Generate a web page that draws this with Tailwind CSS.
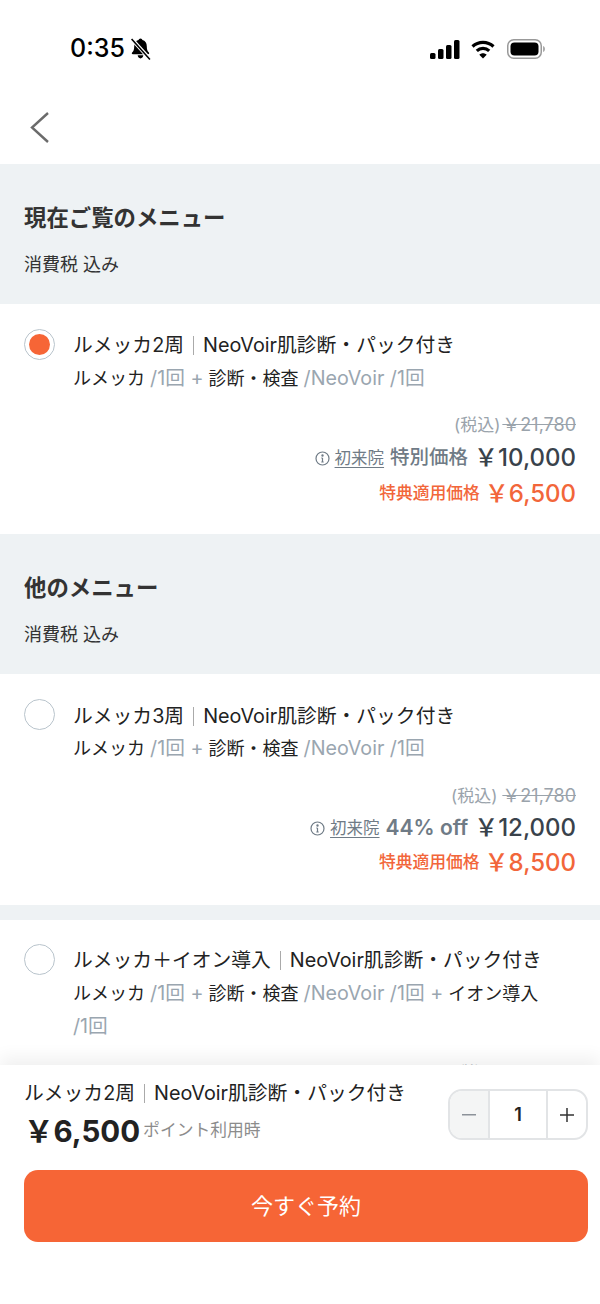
<!DOCTYPE html>
<html lang="ja"><head><meta charset="utf-8"><script src="https://cdn.jsdelivr.net/npm/@tailwindcss/browser@4"></script></head>
<body class="m-0 bg-white">
<div class="relative w-[600px] h-[1304px] overflow-hidden bg-white text-[#222] font-['Inter','Noto_Sans_CJK_JP',sans-serif]">
  <div class="h-[94px] flex justify-between items-start pt-[33px] pl-[70px] pr-[53px]">
    <div class="flex items-center gap-[5px]">
      <span class="text-[25px] leading-[30px] font-medium text-black">0:35</span>
      <svg width="21" height="22" viewBox="0 0 20 21" class="mt-[1px]"><path d="M10 .5c1 0 1.700.7 1.800 1.500 2.800.7 4.200 3 4.200 5.800 0 3.200.7 4.700 2 6 .6.7.2 1.700-.7 1.700H2.700c-.9 0-1.300-1-.7-1.700 1.300-1.300 2-2.800 2-6C4 5 5.400 2.700 8.200 2 8.300 1.200 9 .5 10 .5zM7.300 16.500h5.400c-.2 1.500-1.300 3-2.700 3s-2.500-1.500-2.700-3z" fill="#000"/><path d="M2 1.500 18.500 19.500" stroke="#fff" stroke-width="3.500"/><path d="M1.500 1 19 20.500" stroke="#000" stroke-width="1.500"/></svg>
    </div>
    <div class="flex items-center gap-[10px] mt-[6px]">
      <svg width="30" height="19" viewBox="0 0 30 19" fill="#000"><rect x="0" y="13" width="5.500" height="6" rx="1.500"/><rect x="8" y="9" width="5.500" height="10" rx="1.500"/><rect x="16" y="5" width="5.500" height="14" rx="1.500"/><rect x="24" y="0" width="5.500" height="19" rx="1.500"/></svg>
      <svg width="26" height="19" viewBox="0 0 24 19" fill="none" stroke="#000" stroke-width="3.200"><path d="M1.500 6.500C7.500 1 16.500 1 22.500 6.500"/><path d="M5.800 10.800C9.300 7.500 14.700 7.500 18.200 10.800"/><path d="M12 18.500 8.300 14.700C10.500 12.700 13.500 12.700 15.700 14.700Z" fill="#000" stroke="none"/></svg>
      <svg width="41" height="20" viewBox="0 0 39 20"><rect x=".75" y=".75" width="33.500" height="18.500" rx="6" fill="none" stroke="#999" stroke-width="1.500"/><rect x="3.500" y="3.500" width="28" height="13" rx="4" fill="#000"/><path d="M36 7c1.500.5 2 1.600 2 3s-.5 2.500-2 3z" fill="#aaa"/></svg>
    </div>
  </div>
  <div class="h-[70px] pl-[30px] pt-[17px]">
    <svg width="20" height="32" viewBox="0 0 20 32" fill="none" stroke="#6b6b6b" stroke-width="2.400"><path d="M18 2 2 16.500 18 31" /></svg>
  </div>

  <section class="h-[140px] bg-[#eef2f4] px-6 pt-[39px]">
    <h2 class="text-[22.400px] leading-[30px] font-semibold text-[#333]">現在ご覧のメニュー</h2>
    <p class="mt-[20px] text-[18px] leading-[24px] text-[#333]">消費税 込み</p>
  </section>

  <article class="h-[230px] pl-6 pr-6 pt-[26px]">
    <div class="flex gap-[18px]">
      <div class="w-[31px] h-[31px] mt-[-1px] rounded-full border-[1.500px] border-[#b9c4cc] flex items-center justify-center shrink-0"><div class="w-[21px] h-[21px] rounded-full bg-[#f66536]"></div></div>
      <div>
        <div class="text-[19.800px] leading-[30px] text-[#222]">ルメッカ2周<span class="inline-block w-px h-[19px] bg-[#aaa] mx-[9px] align-[-3px]"></span>NeoVoir肌診断・パック付き</div>
        <div class="mt-[3px] text-[18px] leading-[30px] text-[#222]">ルメッカ <span class="text-[#9aa6b0] text-[19.700px]">/1回 +</span> 診断・検査 <span class="text-[#9aa6b0] text-[19.700px]">/NeoVoir /1回</span></div>
      </div>
    </div>
    <div class="mt-[19px] flex flex-col items-end">
      <div class="text-[17px] leading-[24px] text-[#9aa3ab] flex gap-[2px]"><span>(税込)</span><span class="line-through text-[18px]">￥21,780</span></div>
      <div class="h-[36px] flex items-center gap-[6px] mt-[3px]">
        <span class="flex items-center gap-[5px] text-[#6f7b86] text-[16.500px]"><svg width="15" height="15" viewBox="0 0 15 15" fill="none" stroke="#6f7b86" stroke-width="1.200"><circle cx="7.500" cy="7.500" r="6.500"/><path d="M7.500 7v4M6.300 7h1.200M6.300 11h2.400"/><circle cx="7.500" cy="4.500" r=".6" fill="#6f7b86"/></svg><span class="underline underline-offset-3">初来院</span></span>
        <span class="text-[19.500px] text-[#6f7b86] font-medium">特別価格</span>
        <span class="text-[24px] font-medium text-[#39424b]">￥10,000</span>
      </div>
      <div class="h-[36px] flex items-center gap-[5px]">
        <span class="text-[16.800px] font-medium text-[#f2663a]">特典適用価格</span>
        <span class="text-[24px] font-medium text-[#f2663a]">￥6,500</span>
      </div>
    </div>
  </article>

  <section class="h-[140px] bg-[#eef2f4] px-6 pt-[39px]">
    <h2 class="text-[22.400px] leading-[30px] font-semibold text-[#333]">他のメニュー</h2>
    <p class="mt-[20px] text-[18px] leading-[24px] text-[#333]">消費税 込み</p>
  </section>

  <article class="h-[231px] pl-6 pr-6 pt-[27px]">
    <div class="flex gap-[18px]">
      <div class="w-[31px] h-[31px] mt-[-2px] rounded-full border-[1.500px] border-[#b9c4cc] shrink-0"></div>
      <div>
        <div class="text-[19.800px] leading-[30px] text-[#222]">ルメッカ3周<span class="inline-block w-px h-[19px] bg-[#aaa] mx-[9px] align-[-3px]"></span>NeoVoir肌診断・パック付き</div>
        <div class="mt-[2px] text-[18px] leading-[30px] text-[#222]">ルメッカ <span class="text-[#9aa6b0] text-[19.700px]">/1回 +</span> 診断・検査 <span class="text-[#9aa6b0] text-[19.700px]">/NeoVoir /1回</span></div>
      </div>
    </div>
    <div class="mt-[20px] flex flex-col items-end">
      <div class="text-[17px] leading-[24px] text-[#9aa3ab] flex gap-[5px]"><span>(税込)</span><span class="line-through text-[18px]">￥21,780</span></div>
      <div class="h-[36px] flex items-center gap-[6px] mt-[2px]">
        <span class="flex items-center gap-[5px] text-[#6f7b86] text-[16.500px]"><svg width="15" height="15" viewBox="0 0 15 15" fill="none" stroke="#6f7b86" stroke-width="1.200"><circle cx="7.500" cy="7.500" r="6.500"/><path d="M7.500 7v4M6.300 7h1.200M6.300 11h2.400"/><circle cx="7.500" cy="4.500" r=".6" fill="#6f7b86"/></svg><span class="underline underline-offset-3">初来院</span></span>
        <span class="text-[21px] text-[#6f7b86] font-semibold">44% off</span>
        <span class="text-[24px] font-medium text-[#39424b]">￥12,000</span>
      </div>
      <div class="h-[36px] flex items-center gap-[5px] -mt-[1px]">
        <span class="text-[16.800px] font-medium text-[#f2663a]">特典適用価格</span>
        <span class="text-[24px] font-medium text-[#f2663a]">￥8,500</span>
      </div>
    </div>
  </article>

  <div class="h-[15px] bg-[#eef2f4]"></div>

  <article class="pl-6 pr-6 pt-[25px]">
    <div class="flex gap-[18px]">
      <div class="w-[31px] h-[31px] mt-[-1px] rounded-full border-[1.500px] border-[#b9c4cc] shrink-0"></div>
      <div>
        <div class="text-[19.800px] leading-[30px] text-[#222]">ルメッカ＋イオン導入<span class="inline-block w-px h-[19px] bg-[#aaa] mx-[9px] align-[-3px]"></span>NeoVoir肌診断・パック付き</div>
        <div class="mt-[2px] text-[18px] leading-[33px] text-[#222]">ルメッカ <span class="text-[#9aa6b0] text-[19.700px]">/1回 +</span> 診断・検査 <span class="text-[#9aa6b0] text-[19.700px]">/NeoVoir /1回 +</span> イオン導入 <span class="text-[#9aa6b0] text-[19.700px] inline-block whitespace-nowrap">/1回</span></div>
      </div>
    </div>
    <div class="mt-[18px] flex justify-end">
      <div class="text-[17px] leading-[24px] text-[#9aa3ab] flex gap-[5px]"><span>(税込)</span><span class="line-through text-[18px]">￥21,780</span></div>
    </div>
  </article>

  <div class="absolute left-0 right-0 top-[1065px] bottom-0 bg-white shadow-[0_-8px_16px_rgba(0,0,0,0.06)] pl-6 pr-3">
    <div class="flex justify-between">
      <div>
        <div class="mt-[13px] text-[19.800px] leading-[30px] text-[#222] whitespace-nowrap">ルメッカ2周<span class="inline-block w-px h-[19px] bg-[#aaa] mx-[9px] align-[-3px]"></span>NeoVoir肌診断・パック付き</div>
        <div class="flex items-center mt-[3px] h-[40px]">
          <span class="text-[29.500px] font-bold text-[#222]">￥6,500</span>
          <span class="text-[16.800px] text-[#8c8c8c] ml-[3px]">ポイント利用時</span>
        </div>
      </div>
      <div class="mt-[24px] w-[140px] h-[51px] rounded-[14px] border-2 border-[#e2e4e6] flex items-stretch">
        <div class="w-[40px] bg-[#f4f5f5] rounded-l-[12px] border-r-2 border-[#e2e4e6] flex items-center justify-center"><svg width="14" height="2"><rect width="14" height="1.500" fill="#8c9299"/></svg></div>
        <div class="flex-1 flex items-center justify-center text-[18px] font-semibold text-[#222]">1</div>
        <div class="w-[40px] border-l-2 border-[#e2e4e6] flex items-center justify-center"><svg width="14" height="14"><path d="M7 0v14M0 7h14" stroke="#333" stroke-width="1.500"/></svg></div>
      </div>
    </div>
    <button class="mt-[19px] w-[564px] h-[72px] rounded-[14px] bg-[#f66536] text-white text-[22px] font-normal flex items-center justify-center">今すぐ予約</button>
  </div>
</div>
</body></html>
